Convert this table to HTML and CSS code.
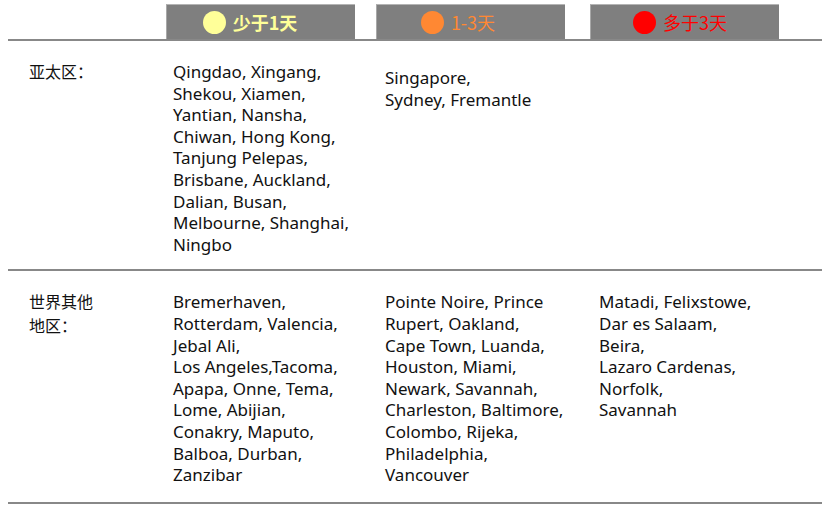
FILE: index.html
```html
<!DOCTYPE html>
<html lang="zh">
<head>
<meta charset="utf-8">
<link rel="stylesheet" href="styles.css">
</head>
<body>
<div class="table">
  <div class="head">
    <div class="hcell"></div>
    <div class="hcell"><div class="tag tag-fast"><span class="dot"></span><span>少于1天</span></div></div>
    <div class="hcell"><div class="tag tag-mid"><span class="dot"></span><span>1-3天</span></div></div>
    <div class="hcell"><div class="tag tag-slow"><span class="dot"></span><span>多于3天</span></div></div>
  </div>
  <div class="row row-first">
    <div class="label">亚太区：</div>
    <div class="cell c1">Qingdao, Xingang,<br>Shekou, Xiamen,<br>Yantian, Nansha,<br>Chiwan, Hong Kong,<br>Tanjung Pelepas,<br>Brisbane, Auckland,<br>Dalian, Busan,<br>Melbourne, Shanghai,<br>Ningbo</div>
    <div class="cell c2 shift">Singapore,<br>Sydney, Fremantle</div>
    <div class="cell c3"></div>
  </div>
  <div class="row">
    <div class="label">世界其他<br>地区：</div>
    <div class="cell c1">Bremerhaven,<br>Rotterdam, Valencia,<br>Jebal Ali,<br>Los Angeles,Tacoma,<br>Apapa, Onne, Tema,<br>Lome, Abijian,<br>Conakry, Maputo,<br>Balboa, Durban,<br>Zanzibar</div>
    <div class="cell c2">Pointe Noire, Prince<br>Rupert, Oakland,<br>Cape Town, Luanda,<br>Houston, Miami,<br>Newark, Savannah,<br>Charleston, Baltimore,<br>Colombo, Rijeka,<br>Philadelphia,<br>Vancouver</div>
    <div class="cell c3">Matadi, Felixstowe,<br>Dar es Salaam,<br>Beira,<br>Lazaro Cardenas,<br>Norfolk,<br>Savannah</div>
  </div>
</div>
</body>
</html>
```
FILE: styles.css
```css
html, body {
  margin: 0;
  padding: 0;
  background: #fff;
}
body {
  padding: 4px 12px 0 8px;
  font-family: "Noto Sans", "Noto Sans CJK SC", sans-serif;
  color: #111;
}
.table {
  display: flex;
  flex-direction: column;
}
.head, .row {
  display: grid;
  grid-template-columns: 158px 210px 214px 1fr;
}
.head {
  border-bottom: 2px solid #888;
}
.hcell {
  display: flex;
}
.tag {
  width: 189px;
  height: 35px;
  background: #7f7f7f;
  border-top: 1px solid #b4b4b4;
  border-left: 1px solid #a8a8a8;
  box-sizing: border-box;
  display: flex;
  align-items: center;
  justify-content: center;
  gap: 7px;
  font-family: "Noto Sans CJK SC", sans-serif;
  font-size: 18px;
  padding-right: 22px;
}
.dot {
  width: 23px;
  height: 23px;
  border-radius: 50%;
}
.tag-fast { color: #ffff99; font-weight: 700; }
.tag-fast .dot { background: #ffff99; }
.tag-mid { color: #ff8833; padding-right: 26px; }
.tag-mid .dot { background: #ff8833; }
.tag-slow { color: #ff0000; padding-right: 10px; }
.tag-slow .dot { background: #ff0000; }
.row {
  border-bottom: 2px solid #888;
  padding: 20px 0 14px;
  font-size: 17px;
  line-height: 21.6px;
}
.row + .row {
  padding-bottom: 16px;
}
.label {
  padding-left: 21px;
  margin-top: -1px;
  font-family: "Noto Sans CJK SC", sans-serif;
  font-size: 16px;
  line-height: 23.5px;
}
.c1 { padding-left: 7px; }
.c2 { padding-left: 9px; }
.c3 { padding-left: 9px; }
.shift { padding-top: 6px; }
```
